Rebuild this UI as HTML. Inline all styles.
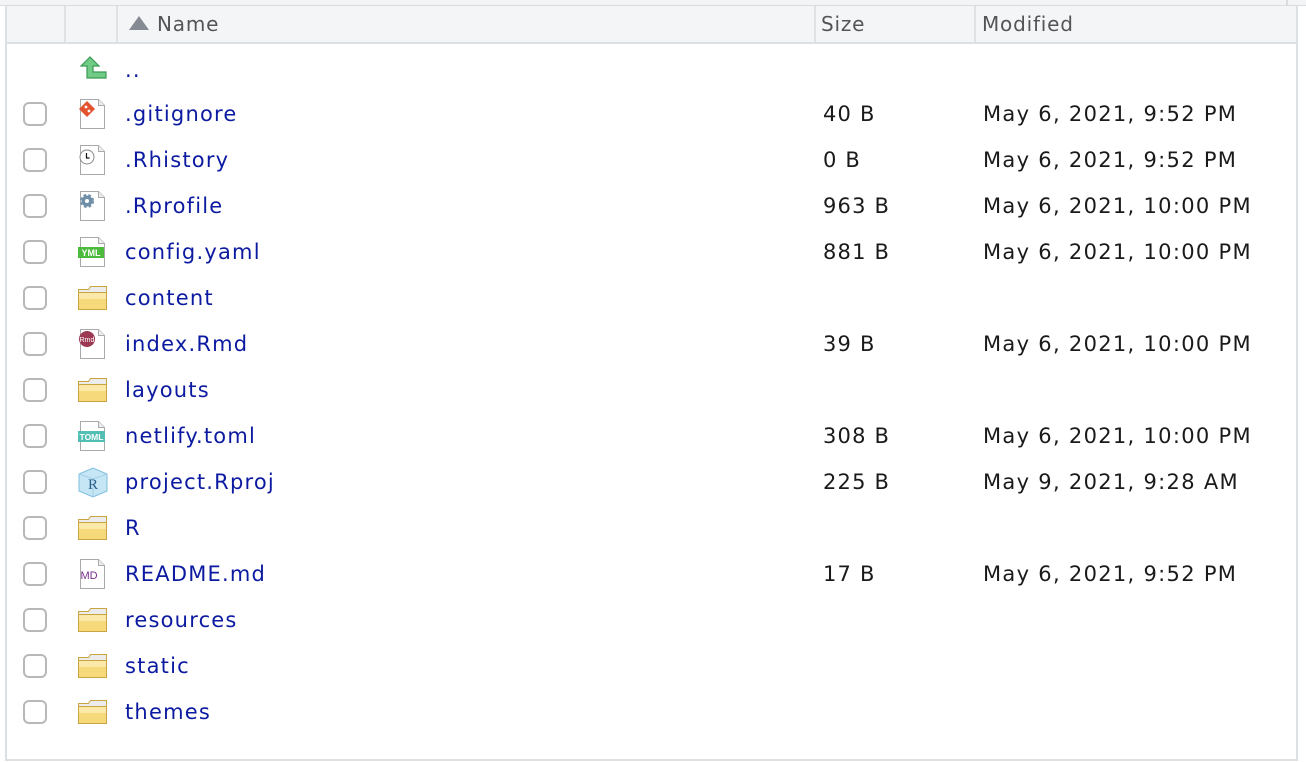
<!DOCTYPE html>
<html><head><meta charset="utf-8"><style>
*{margin:0;padding:0;box-sizing:border-box}
body{width:1306px;height:762px;background:#fff;position:relative;overflow:hidden;font-family:"DejaVu Sans","Liberation Sans",sans-serif}
.top{position:absolute;left:0;top:0;width:1306px;height:6px;background:#f3f4f5;border-bottom:1px solid #d8dcdf}
.frame{position:absolute;left:5px;top:5px;width:1293px;height:756px;border:2px solid #dde0e3;border-top:none}
.hdr{position:absolute;left:7px;top:6px;width:1289px;height:38px;background:#f3f5f7;border-bottom:2px solid #dde1e4}
.vd{position:absolute;top:6px;height:38px;width:2px;background:#dfe2e5}
.ht{position:absolute;top:12px;font-size:20px;color:#555;letter-spacing:0.8px}
.row{position:absolute;left:0;width:1306px;height:46px}
.cb{position:absolute;left:23px;top:12px;width:24px;height:24px;border:2px solid #b8b8b8;border-radius:6px;background:#fff}
.ic{position:absolute;left:77px;top:8px;width:32px;height:32px}
.nm{position:absolute;left:125px;top:12px;font-size:21px;color:#0b1aa0;letter-spacing:1.2px}
.sz{position:absolute;left:823px;top:12px;font-size:21px;color:#1a1a1a;letter-spacing:1.2px}
.md{position:absolute;left:983px;top:12px;font-size:21px;color:#1a1a1a;letter-spacing:1.3px}
</style></head><body>
<div class="top"></div>
<div style="position:absolute;left:1286px;top:0;width:2px;height:6px;background:#d8dcdf"></div>
<div class="frame"></div>
<div class="hdr"></div>
<div class="vd" style="left:64px"></div>
<div class="vd" style="left:116px"></div>
<div class="vd" style="left:814px"></div>
<div class="vd" style="left:974px"></div>
<div style="position:absolute;left:129px;top:16px;width:0;height:0;border-left:10px solid transparent;border-right:10px solid transparent;border-bottom:14px solid #858a93"></div>
<div class="ht" style="left:157px">Name</div>
<div class="ht" style="left:821px">Size</div>
<div class="ht" style="left:982px">Modified</div>

<svg width="0" height="0" style="position:absolute">
<defs>
<symbol id="doc" viewBox="0 0 32 32"><path d="M3.5 1.5h18l6 6v23h-24z" fill="#fff" stroke="#aaa"/><path d="M21.5 1.5v6h6" fill="#eee" stroke="#aaa"/></symbol>
<symbol id="fold" viewBox="0 0 32 32"><path d="M1.5 7.5h10l2-3h16v22h-28z" fill="#ececec" stroke="#c9a541"/><path d="M1.5 10.5h28v17h-28z" fill="#f5d97a" stroke="#c9a541"/><rect x="2" y="11" width="27" height="6" fill="#fbe9a9"/></symbol>
</defs></svg>

<div class="row" style="top:46px">
<svg class="ic" viewBox="0 0 32 32"><path d="M13 3 L4 12 H10 V24 H29 V18 H16 V12 H22 Z" fill="#6fcb86" stroke="#3a9a55" stroke-width="1.2"/></svg>
<div class="nm">..</div></div>

<div class="row" style="top:90px"><div class="cb"></div>
<svg class="ic" viewBox="0 0 32 32"><use href="#doc"/><path d="M10 3 L18 11 L10 19 L2 11Z" fill="#e4532f"/><circle cx="9" cy="9" r="1.4" fill="#fff"/><circle cx="12" cy="13" r="1.4" fill="#fff"/></svg>
<div class="nm">.gitignore</div><div class="sz">40 B</div><div class="md">May 6, 2021, 9:52 PM</div></div>

<div class="row" style="top:136px"><div class="cb"></div>
<svg class="ic" viewBox="0 0 32 32"><use href="#doc"/><circle cx="10" cy="13" r="7" fill="#fff" stroke="#888"/><path d="M9.5 9v5h3" stroke="#111" fill="none" stroke-width="1.2"/></svg>
<div class="nm">.Rhistory</div><div class="sz">0 B</div><div class="md">May 6, 2021, 9:52 PM</div></div>

<div class="row" style="top:182px"><div class="cb"></div>
<svg class="ic" viewBox="0 0 32 32"><use href="#doc"/><circle cx="10" cy="11" r="5.5" fill="#6f8fa8" stroke="#6f8fa8" stroke-width="3" stroke-dasharray="2.5 2"/><circle cx="10" cy="11" r="2" fill="#fff"/></svg>
<div class="nm">.Rprofile</div><div class="sz">963 B</div><div class="md">May 6, 2021, 10:00 PM</div></div>

<div class="row" style="top:228px"><div class="cb"></div>
<svg class="ic" viewBox="0 0 32 32"><use href="#doc"/><rect x="1" y="11" width="26" height="11" fill="#4cba3c"/><text x="14" y="20" font-size="9" fill="#fff" text-anchor="middle" font-family="Liberation Sans" font-weight="bold">YML</text></svg>
<div class="nm">config.yaml</div><div class="sz">881 B</div><div class="md">May 6, 2021, 10:00 PM</div></div>

<div class="row" style="top:274px"><div class="cb"></div><svg class="ic" viewBox="0 0 32 32"><use href="#fold"/></svg><div class="nm">content</div></div>

<div class="row" style="top:320px"><div class="cb"></div>
<svg class="ic" viewBox="0 0 32 32"><use href="#doc"/><circle cx="10" cy="11" r="8" fill="#9b3a52"/><text x="10" y="14" font-size="7" fill="#fff" text-anchor="middle" font-family="Liberation Sans">Rmd</text></svg>
<div class="nm">index.Rmd</div><div class="sz">39 B</div><div class="md">May 6, 2021, 10:00 PM</div></div>

<div class="row" style="top:366px"><div class="cb"></div><svg class="ic" viewBox="0 0 32 32"><use href="#fold"/></svg><div class="nm">layouts</div></div>

<div class="row" style="top:412px"><div class="cb"></div>
<svg class="ic" viewBox="0 0 32 32"><use href="#doc"/><rect x="1" y="11" width="27" height="11" fill="#52bfb4"/><text x="14.5" y="20" font-size="8.5" fill="#fff" text-anchor="middle" font-family="Liberation Sans" font-weight="bold">TOML</text></svg>
<div class="nm">netlify.toml</div><div class="sz">308 B</div><div class="md">May 6, 2021, 10:00 PM</div></div>

<div class="row" style="top:458px"><div class="cb"></div>
<svg class="ic" viewBox="0 0 32 32"><path d="M2 8 L16 2 L30 8 V25 L16 31 L2 25Z" fill="#c6e6f5" stroke="#7fbfdd"/><path d="M2 8 L16 13 L30 8 M16 13 V31" fill="none" stroke="#9fd0e8"/><text x="16" y="23" font-size="15" fill="#2a5d8a" text-anchor="middle" font-family="Liberation Serif">R</text></svg>
<div class="nm">project.Rproj</div><div class="sz">225 B</div><div class="md">May 9, 2021, 9:28 AM</div></div>

<div class="row" style="top:504px"><div class="cb"></div><svg class="ic" viewBox="0 0 32 32"><use href="#fold"/></svg><div class="nm">R</div></div>

<div class="row" style="top:550px"><div class="cb"></div>
<svg class="ic" viewBox="0 0 32 32"><use href="#doc"/><text x="12" y="21" font-size="11" fill="#7b2c8c" text-anchor="middle" font-family="Liberation Sans">MD</text></svg>
<div class="nm">README.md</div><div class="sz">17 B</div><div class="md">May 6, 2021, 9:52 PM</div></div>

<div class="row" style="top:596px"><div class="cb"></div><svg class="ic" viewBox="0 0 32 32"><use href="#fold"/></svg><div class="nm">resources</div></div>
<div class="row" style="top:642px"><div class="cb"></div><svg class="ic" viewBox="0 0 32 32"><use href="#fold"/></svg><div class="nm">static</div></div>
<div class="row" style="top:688px"><div class="cb"></div><svg class="ic" viewBox="0 0 32 32"><use href="#fold"/></svg><div class="nm">themes</div></div>
</body></html>
